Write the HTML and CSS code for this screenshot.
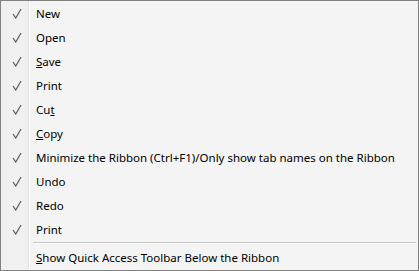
FILE: index.html
```html
<!DOCTYPE html>
<html>
<head>
<meta charset="utf-8">
<link rel="stylesheet" href="styles.css">
</head>
<body>
<div class="menu">
  <div class="item"><span class="gut"><svg class="chk" viewBox="0 0 10 11"><path d="M1 6 L3.8 10 L9 1"/></svg></span><span class="label">New</span></div>
  <div class="item"><span class="gut"><svg class="chk" viewBox="0 0 10 11"><path d="M1 6 L3.8 10 L9 1"/></svg></span><span class="label">Open</span></div>
  <div class="item"><span class="gut"><svg class="chk" viewBox="0 0 10 11"><path d="M1 6 L3.8 10 L9 1"/></svg></span><span class="label"><u>S</u>ave</span></div>
  <div class="item"><span class="gut"><svg class="chk" viewBox="0 0 10 11"><path d="M1 6 L3.8 10 L9 1"/></svg></span><span class="label">Print</span></div>
  <div class="item"><span class="gut"><svg class="chk" viewBox="0 0 10 11"><path d="M1 6 L3.8 10 L9 1"/></svg></span><span class="label">Cu<u>t</u></span></div>
  <div class="item"><span class="gut"><svg class="chk" viewBox="0 0 10 11"><path d="M1 6 L3.8 10 L9 1"/></svg></span><span class="label"><u>C</u>opy</span></div>
  <div class="item"><span class="gut"><svg class="chk" viewBox="0 0 10 11"><path d="M1 6 L3.8 10 L9 1"/></svg></span><span class="label">Minimize the Ribbon (Ctrl+F1)/Only show tab names on the Ribbon</span></div>
  <div class="item"><span class="gut"><svg class="chk" viewBox="0 0 10 11"><path d="M1 6 L3.8 10 L9 1"/></svg></span><span class="label">Undo</span></div>
  <div class="item"><span class="gut"><svg class="chk" viewBox="0 0 10 11"><path d="M1 6 L3.8 10 L9 1"/></svg></span><span class="label">Redo</span></div>
  <div class="item"><span class="gut"><svg class="chk" viewBox="0 0 10 11"><path d="M1 6 L3.8 10 L9 1"/></svg></span><span class="label">Print</span></div>
  <div class="sep"><span class="gut"></span><span class="line"></span></div>
  <div class="item"><span class="gut"></span><span class="label"><u>S</u>how Quick Access Toolbar Below the Ribbon</span></div>
</div>
</body>
</html>
```
FILE: styles.css
```css
html, body {
  margin: 0;
  padding: 0;
  background: #f4f4f4;
}
.menu {
  width: 419px;
  height: 271px;
  box-sizing: border-box;
  border: 1px solid #808080;
  background: #f4f4f4;
  font-family: "Noto Sans", "Liberation Sans", sans-serif;
  font-size: 11.5px;
  color: #000;
  display: flex;
  flex-direction: column;
}
.item {
  height: 24px;
  display: flex;
  align-items: stretch;
}
.gut {
  width: 27px;
  flex: none;
  background: #f0f0f0;
  border-right: 1px solid #e2e3e3;
  box-shadow: 1px 0 0 #ffffff;
  display: flex;
  align-items: center;
  justify-content: center;
}
.chk {
  width: 10px;
  height: 11px;
  fill: none;
  stroke: #5a5a5a;
  stroke-width: 1.2;
  margin-left: 4px;
  margin-top: 1px;
}
.label {
  padding-left: 7px;
  padding-top: 1px;
  line-height: 24px;
  white-space: nowrap;
}
.sep {
  height: 4px;
  display: flex;
}
.line {
  flex: 1;
  margin: 1px 2px 0 4px;
  height: 1px;
  background: #c5c5c5;
  box-shadow: 0 1px 0 #ffffff;
}
```
